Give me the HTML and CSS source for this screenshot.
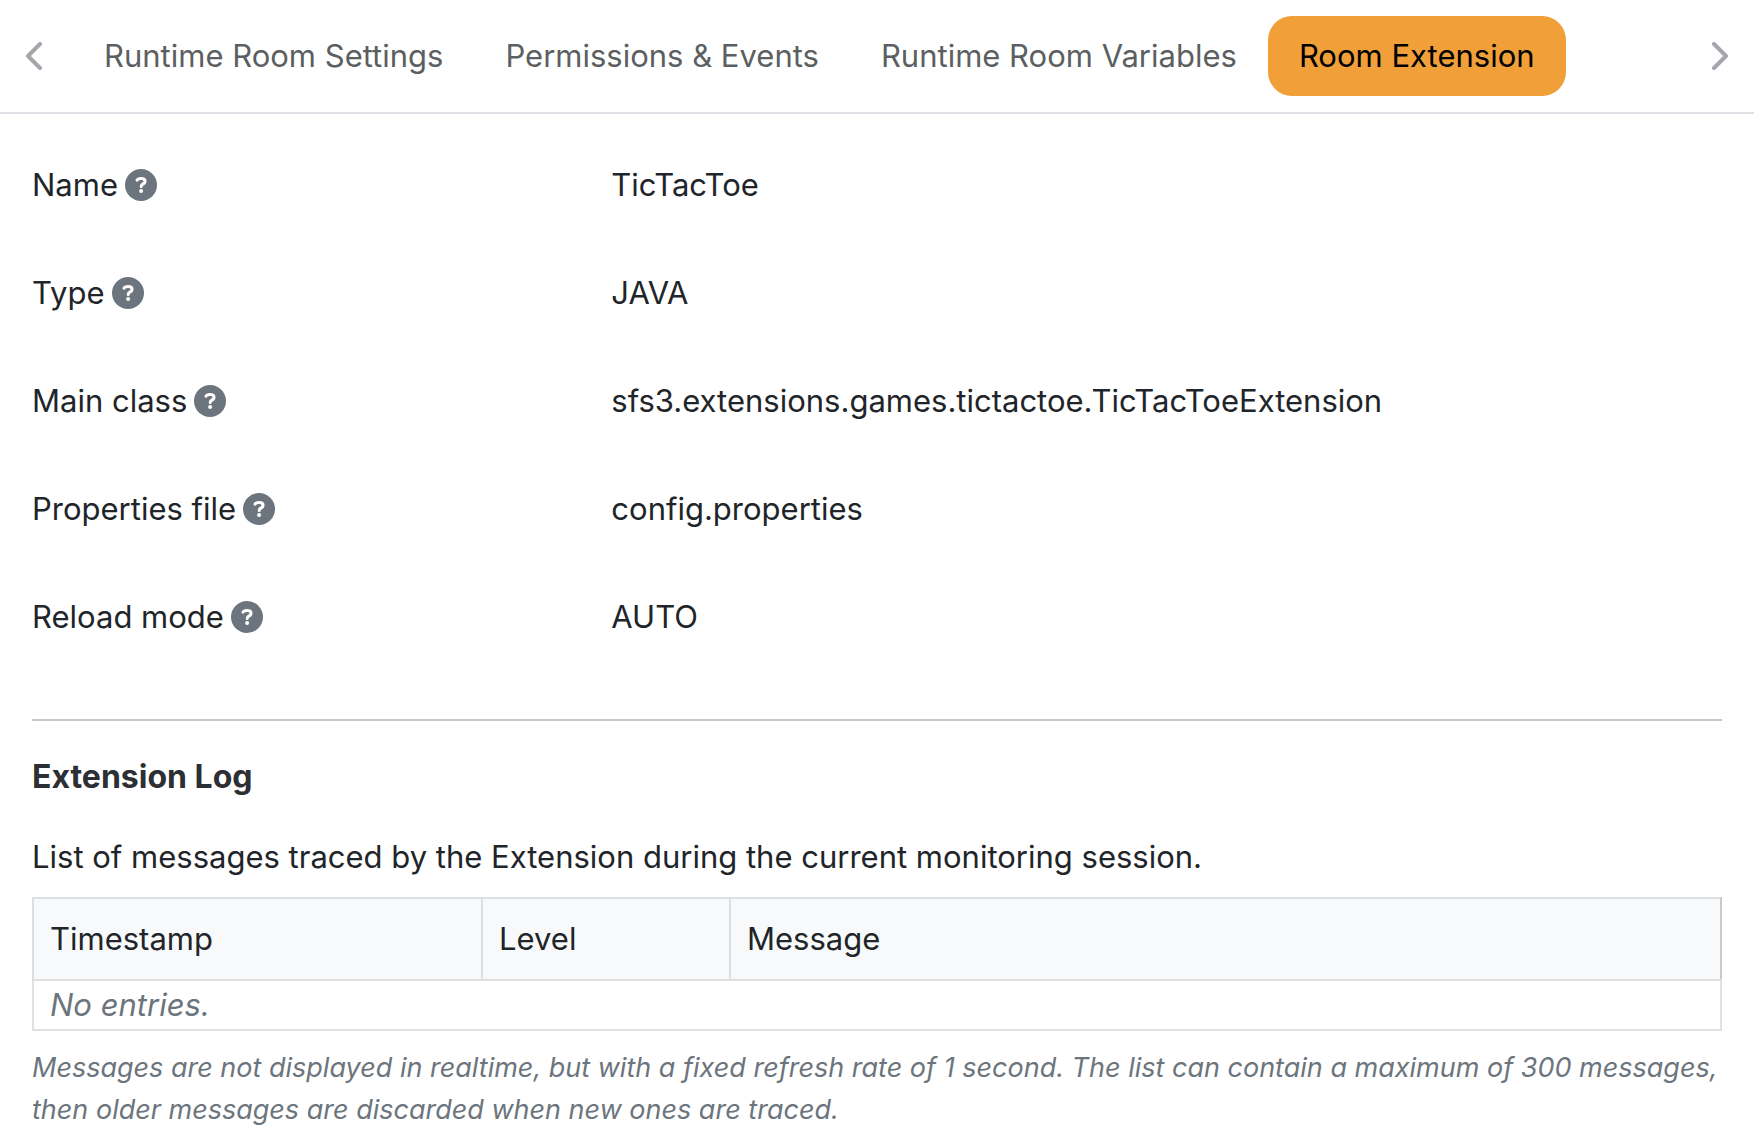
FILE: index.html
```
<!DOCTYPE html>
<html lang="en">
<head>
<meta charset="utf-8">
<meta name="viewport" content="width=device-width, initial-scale=1">
<title>Room Extension</title>
<link rel="stylesheet" href="styles.css">
</head>
<body>
<svg class="sprite" aria-hidden="true">
  <symbol id="help" viewBox="0 0 32 32">
    <circle cx="16" cy="16" r="16" fill="#6c757d"/>
    <path d="M12 11.2C12.6 9.9 14 9.5 16 9.5C18.6 9.5 20.1 10.5 20.1 12.4C20.1 15 16.2 14.8 16.2 17.4" fill="none" stroke="#fff" stroke-width="3" stroke-linecap="round" stroke-linejoin="round"/>
    <circle cx="16.1" cy="22" r="2" fill="#fff"/>
  </symbol>
</svg>
<header class="tabbar">
  <button class="scroll" type="button" aria-label="Previous tabs">
    <svg width="16" height="28" viewBox="0 0 16 28"><path d="M14 2L2 14L14 26"/></svg>
  </button>
  <nav class="tabs">
    <a class="tab" href="#settings">Runtime Room Settings</a>
    <a class="tab" href="#permissions">Permissions &amp; Events</a>
    <a class="tab" href="#variables">Runtime Room Variables</a>
    <a class="tab active" href="#extension" aria-current="page">Room Extension</a>
  </nav>
  <button class="scroll" type="button" aria-label="Next tabs">
    <svg width="16" height="28" viewBox="0 0 16 28"><path d="M2 2L14 14L2 26"/></svg>
  </button>
</header>
<main class="content">
  <dl class="fields">
    <div class="field"><dt>Name <svg class="help"><use href="#help"/></svg></dt><dd>TicTacToe</dd></div>
    <div class="field"><dt>Type <svg class="help"><use href="#help"/></svg></dt><dd>JAVA</dd></div>
    <div class="field"><dt>Main class <svg class="help"><use href="#help"/></svg></dt><dd>sfs3.extensions.games.tictactoe.TicTacToeExtension</dd></div>
    <div class="field"><dt>Properties file <svg class="help"><use href="#help"/></svg></dt><dd>config.properties</dd></div>
    <div class="field"><dt>Reload mode <svg class="help"><use href="#help"/></svg></dt><dd>AUTO</dd></div>
  </dl>
  <section class="log">
    <h2>Extension Log</h2>
    <p class="intro">List of messages traced by the Extension during the current monitoring session.</p>
    <table>
      <colgroup><col class="col-time"><col class="col-level"><col></colgroup>
      <thead><tr><th scope="col">Timestamp</th><th scope="col">Level</th><th scope="col">Message</th></tr></thead>
      <tbody><tr><td colspan="3">No entries.</td></tr></tbody>
    </table>
    <p class="note">Messages are not displayed in realtime, but with a fixed refresh rate of 1 second. The list can contain a maximum of 300 messages, then older messages are discarded when new ones are traced.</p>
  </section>
</main>
</body>
</html>
```
FILE: styles.css
```
* { box-sizing: border-box; }
body {
  margin: 0;
  background: #fff;
  color: #212529;
  font: 31px/48px Inter, "Liberation Sans", sans-serif;
}
.sprite { display: none; }
.tabbar {
  display: flex;
  align-items: center;
  padding: 16px 0;
  border-bottom: 2px solid #dee2e6;
}
.scroll {
  flex: none;
  width: 73px;
  height: 80px;
  padding: 0 26px;
  border: 0;
  background: none;
  text-align: left;
}
.scroll:last-child { text-align: right; }
.scroll svg {
  display: inline-block;
  vertical-align: middle;
  fill: none;
  stroke: #a3a7ad;
  stroke-width: 4;
  stroke-linecap: round;
  stroke-linejoin: round;
}
.tabs { display: flex; flex: 1; }
.tab {
  padding: 16px 31px;
  border-radius: 24px;
  color: #5c5f62;
  text-decoration: none;
  white-space: nowrap;
}
.tab.active { background: #f19f39; color: #000; }
.content { padding: 47px 32px 0; }
.fields {
  display: flex;
  flex-direction: column;
  gap: 60px;
  margin: 0;
  padding-bottom: 78px;
  border-bottom: 2px solid #c8c8c9;
}
.field {
  display: grid;
  grid-template-columns: 1fr 2fr;
  column-gap: 24px;
}
dt { display: flex; align-items: center; gap: 7px; }
dd { margin: 0; }
.help { width: 32px; height: 32px; }
.log { padding-top: 32px; }
h2 {
  margin: 0 0 32px;
  color: #2c2f33;
  font-size: 32px;
  font-weight: 700;
  line-height: 48px;
}
.intro { margin: 0 0 16px; }
table {
  width: 100%;
  table-layout: fixed;
  border-collapse: collapse;
  border: 2px solid #dfe1e3;
}
.col-time { width: 449px; }
.col-level { width: 248px; }
th {
  padding: 16px;
  border: 2px solid #dcdee0;
  background: #f8f9fb;
  font-weight: 400;
  text-align: left;
}
th:last-child { border-right-color: #c8cacc; }
td {
  padding: 0 16px;
  color: #6c757d;
  font-style: italic;
}
.note {
  margin: 16px 0 0;
  color: #6c757d;
  font-size: 27px;
  font-style: italic;
  line-height: 42px;
}
```
